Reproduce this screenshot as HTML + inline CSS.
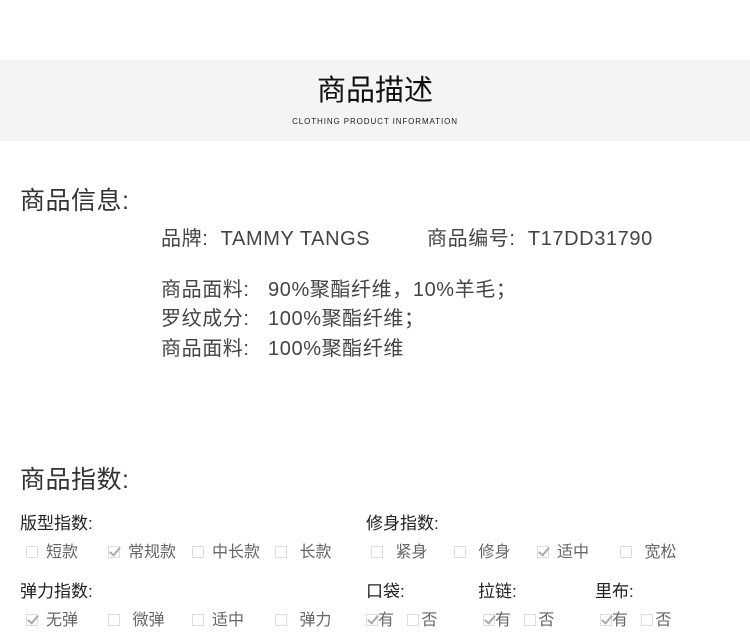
<!DOCTYPE html>
<html><head><meta charset="utf-8"><style>
body{margin:0;width:750px;height:632px;background:#fff;position:relative;overflow:hidden;font-family:"Liberation Sans","Noto Sans CJK SC",sans-serif;}
.a{position:absolute;white-space:nowrap;line-height:1;}
.band{position:absolute;left:0;top:60px;width:750px;height:81px;background:#f4f4f4;}
.t{color:#333;font-size:25px;letter-spacing:0.5px;}
.i{color:#444;font-size:20px;letter-spacing:0.6px;}
.l{color:#222;font-size:17px;}
.o{color:#666;font-size:16px;}
.cb{display:inline-block;width:10px;height:10px;border:1px solid #ddd;vertical-align:-1px;margin-right:8px;position:relative;}
.ck::after{content:"";position:absolute;left:3px;top:-2px;width:4px;height:9px;border:solid #aaa;border-width:0 2px 2px 0;transform:rotate(40deg);}
.s{margin-right:0}
</style></head><body>
<div class="band"></div>
<div class="a" style="left:0;width:750px;text-align:center;top:77px;font-size:29px;color:#111;">商品描述</div>
<div class="a" style="left:0;width:750px;text-align:center;top:118px;font-size:8px;color:#222;letter-spacing:0.9px;">CLOTHING PRODUCT INFORMATION</div>

<div class="a t" style="left:20px;top:189px;">商品信息:</div>
<div class="a i" style="left:161px;top:229px;">品牌:&nbsp;&nbsp;TAMMY TANGS</div>
<div class="a i" style="left:427px;top:229px;">商品编号:&nbsp;&nbsp;T17DD31790</div>
<div class="a i" style="left:161px;top:280px;">商品面料:&nbsp;&nbsp;&nbsp;90%聚酯纤维，10%羊毛；</div>
<div class="a i" style="left:161px;top:309px;">罗纹成分:&nbsp;&nbsp;&nbsp;100%聚酯纤维；</div>
<div class="a i" style="left:161px;top:339px;">商品面料:&nbsp;&nbsp;&nbsp;100%聚酯纤维</div>

<div class="a t" style="left:20px;top:468px;">商品指数:</div>

<div class="a l" style="left:20px;top:515px;">版型指数:</div>
<div class="a o" style="left:26px;top:545px;"><span class="cb"></span>短款</div>
<div class="a o" style="left:108px;top:545px;"><span class="cb ck"></span>常规款</div>
<div class="a o" style="left:192px;top:545px;"><span class="cb"></span>中长款</div>
<div class="a o" style="left:275px;top:545px;"><span class="cb"></span>&nbsp;长款</div>

<div class="a l" style="left:366px;top:515px;">修身指数:</div>
<div class="a o" style="left:371px;top:545px;"><span class="cb"></span>&nbsp;紧身</div>
<div class="a o" style="left:454px;top:545px;"><span class="cb"></span>&nbsp;修身</div>
<div class="a o" style="left:537px;top:545px;"><span class="cb ck"></span>适中</div>
<div class="a o" style="left:620px;top:545px;"><span class="cb"></span>&nbsp;宽松</div>

<div class="a l" style="left:20px;top:583px;">弹力指数:</div>
<div class="a o" style="left:26px;top:613px;"><span class="cb ck"></span>无弹</div>
<div class="a o" style="left:108px;top:613px;"><span class="cb"></span>&nbsp;微弹</div>
<div class="a o" style="left:192px;top:613px;"><span class="cb"></span>适中</div>
<div class="a o" style="left:275px;top:613px;"><span class="cb"></span>&nbsp;弹力</div>

<div class="a l" style="left:366px;top:583px;">口袋:</div>
<div class="a l" style="left:478px;top:583px;">拉链:</div>
<div class="a l" style="left:595px;top:583px;">里布:</div>
<div class="a o" style="left:366px;top:613px;"><span class="cb ck s"></span>有&nbsp;&nbsp;&nbsp;<span class="cb" style="margin-right:2px"></span>否</div>
<div class="a o" style="left:483px;top:613px;"><span class="cb ck s"></span>有&nbsp;&nbsp;&nbsp;<span class="cb" style="margin-right:2px"></span>否</div>
<div class="a o" style="left:600px;top:613px;"><span class="cb ck s"></span>有&nbsp;&nbsp;&nbsp;<span class="cb" style="margin-right:2px"></span>否</div>
</body></html>
